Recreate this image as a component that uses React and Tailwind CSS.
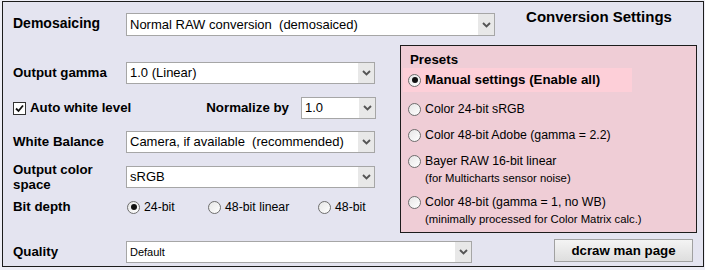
import React from 'react';

const Chevron = () => (
  <svg width="9" height="6" viewBox="0 0 9 6">
    <path d="M1 1 L4.5 4.5 L8 1" fill="none" stroke="#555" strokeWidth="1.9" />
  </svg>
);

const Select = ({ value, className = '', small = false }) => (
  <div className={`flex h-[22px] items-stretch border border-[#a6a6a6] bg-white ${className}`}>
    <div className={`flex flex-1 items-center whitespace-pre pl-[3px] text-black ${small ? 'text-[11px]' : 'text-[13px]'}`}>
      {value}
    </div>
    <div className="flex w-[16px] items-center justify-center bg-[#e8e8e8]">
      <Chevron />
    </div>
  </div>
);

const Radio = ({ checked }) => (
  <div className="flex h-[13px] w-[13px] shrink-0 items-center justify-center rounded-full border border-[#6e6e6e] bg-gradient-to-br from-[#e6e6e6] to-white">
    {checked && <div className="h-[6px] w-[6px] rounded-full bg-[#111]" />}
  </div>
);

const Checkbox = () => (
  <div className="flex h-[13px] w-[13px] shrink-0 items-center justify-center border border-[#333] bg-white">
    <svg width="9" height="9" viewBox="0 0 9 9">
      <path d="M1 4.5 L3.5 7 L8 1.5" fill="none" stroke="#111" strokeWidth="1.8" />
    </svg>
  </div>
);

const Label = ({ children, className = '' }) => (
  <div className={`w-[113px] shrink-0 text-[13.3px] font-bold text-black ${className}`}>{children}</div>
);

const PresetOption = ({ label, note, checked, className = '' }) => (
  <div className={`pl-[7px] ${className}`}>
    <div className="flex h-[16px] items-center gap-[4px] text-[12.3px] text-black">
      <Radio checked={checked} />
      <span>{label}</span>
    </div>
    {note && <div className="mt-[2px] pl-[17px] text-[11.3px] leading-[14px] text-black">{note}</div>}
  </div>
);

export default function App() {
  return (
    <div className="h-[270px] w-[705px] bg-[#eeeef6] pt-[1px] font-['Liberation_Sans',Arial,sans-serif]">
      <div className="ml-[2px] h-[266px] w-[702px] border border-[#1c1c1c] bg-[#e4e4f0] pl-[10px]">
        {/* top row */}
        <div className="mt-[11px] flex items-start">
          <div className="flex h-[23px] w-[113px] shrink-0 items-center pb-[2px] text-[14px] font-bold text-black">
            Demosaicing
          </div>
          <Select value="Normal RAW conversion  (demosaiced)" className="h-[23px] w-[369px]" />
          <div className="-mt-[5px] flex-1 text-center text-[15px] font-bold leading-[18px] text-black">
            Conversion Settings
          </div>
        </div>

        {/* middle */}
        <div className="mt-[9px] flex items-start">
          <div className="w-[387px] shrink-0">
            <div className="mt-[17px] flex items-center">
              <Label>Output gamma</Label>
              <Select value="1.0 (Linear)" className="w-[249px]" />
            </div>

            <div className="mt-[13px] flex w-[363px] items-center">
              <Checkbox />
              <span className="ml-[4px] text-[13.3px] font-bold text-black">Auto white level</span>
              <span className="ml-auto text-[13.3px] font-bold text-black">Normalize by</span>
              <Select value="1.0" className="ml-[12px] w-[75px]" />
            </div>

            <div className="mt-[12px] flex items-center">
              <Label>White Balance</Label>
              <Select value="Camera, if available  (recommended)" className="w-[249px]" />
            </div>

            <div className="mt-[9px] flex items-start">
              <Label className="leading-[15px]">Output color space</Label>
              <Select value="sRGB" className="mt-[4px] w-[249px]" />
            </div>

            <div className="mt-[7px] flex h-[16px] items-center">
              <Label>Bit depth</Label>
              <div className="ml-[1px] flex w-[81px] items-center gap-[4px] text-[12.3px] text-black">
                <Radio checked />
                <span>24-bit</span>
              </div>
              <div className="flex w-[110px] items-center gap-[4px] text-[12.3px] text-black">
                <Radio />
                <span>48-bit linear</span>
              </div>
              <div className="flex items-center gap-[4px] text-[12.3px] text-black">
                <Radio />
                <span>48-bit</span>
              </div>
            </div>
          </div>

          <div className="h-[188px] w-[297px] shrink-0 border border-[#1c1c1c] bg-[#efcdd6]">
            <div className="mt-[6px] pl-[9px] text-[13.3px] font-bold leading-[16px] text-black">Presets</div>
            <div className="ml-[2px] flex h-[24px] w-[229px] items-center gap-[4px] bg-[#fdcfd8] pl-[5px] text-[13.3px] font-bold text-black">
              <Radio checked />
              <span>Manual settings (Enable all)</span>
            </div>
            <PresetOption label="Color 24-bit sRGB" className="mt-[9px]" />
            <PresetOption label="Color 48-bit Adobe (gamma = 2.2)" className="mt-[10px]" />
            <PresetOption
              label="Bayer RAW 16-bit linear"
              note="(for Multicharts sensor noise)"
              className="mt-[10px]"
            />
            <PresetOption
              label="Color 48-bit (gamma = 1, no WB)"
              note="(minimally processed for Color Matrix calc.)"
              className="mt-[9px]"
            />
          </div>
        </div>

        {/* bottom row */}
        <div className="mt-[6px] flex items-start">
          <Label className="mt-[2px] flex h-[22px] items-center">Quality</Label>
          <Select value="Default" small className="mt-[2px] w-[346px]" />
          <button className="ml-[82px] h-[23px] w-[139px] border border-[#a0a0a0] bg-gradient-to-b from-[#f4f4f4] to-[#dedede] text-[13.3px] font-bold text-black">
            dcraw man page
          </button>
        </div>
      </div>
    </div>
  );
}
